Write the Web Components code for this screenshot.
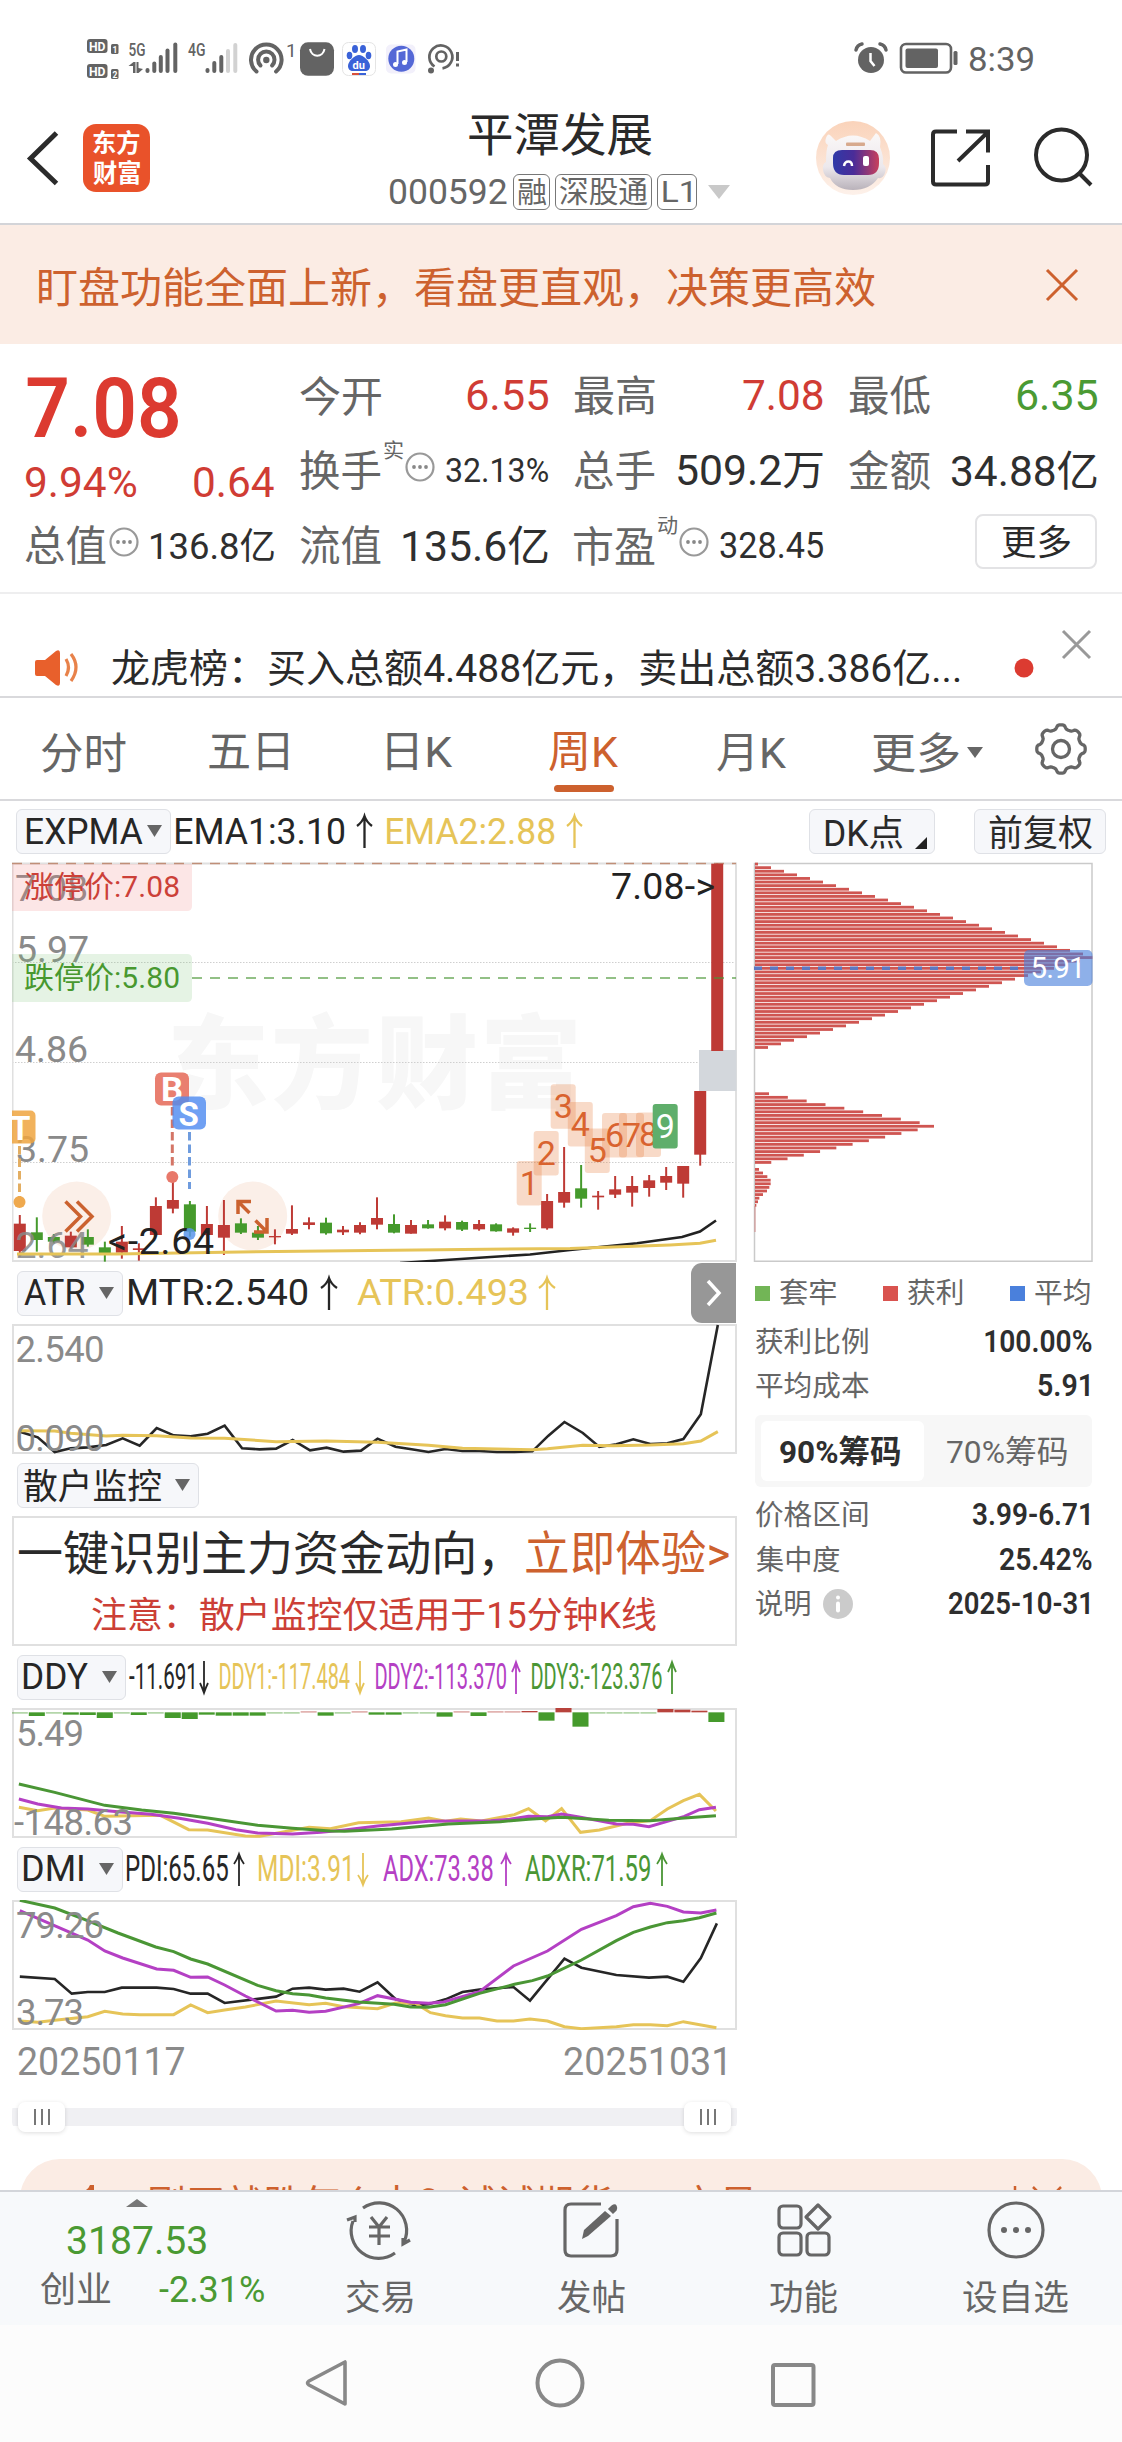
<!DOCTYPE html>
<html lang="zh-CN">
<head>
<meta charset="utf-8">
<title>平潭发展 000592</title>
<style>
html,body{margin:0;padding:0;background:#fff}
body{width:1122px;height:2442px;overflow:hidden;font-family:Roboto,"Noto Sans CJK SC",sans-serif;color:#2a2a2a;
--up:#d03c34;--down:#4a9a33;--brand:#cd612e;--gold:#e6c458;--violet:#b440c4;--mute:#666;--ink:#262626}
</style>
</head>
<body>
<stock-app></stock-app>
<script>
const FONT='Roboto,"Noto Sans CJK SC",sans-serif';
const ctx=document.createElement('canvas').getContext('2d');

/* Text whose box is trimmed to its ink: w = ink width, s = font size, b = weight, m = left margin, dy = vertical nudge */
customElements.define('fit-text',class extends HTMLElement{
  connectedCallback(){
    if(this.shadowRoot)return;
    const r=this.attachShadow({mode:'open'});
    const s=+this.getAttribute('s')||36,b=this.getAttribute('b')||400,w=+this.getAttribute('w');
    ctx.font=`${b} ${s}px ${FONT}`;
    const q=ctx.measureText(this.textContent.trim());
    const ink=q.actualBoundingBoxLeft+q.actualBoundingBoxRight;
    const k=w?w/ink:1,A=q.fontBoundingBoxAscent,D=q.fontBoundingBoxDescent;
    const base=(s-(A+D))/2+A,h=q.actualBoundingBoxAscent+q.actualBoundingBoxDescent;
    const m=+this.getAttribute('m')||0,dy=+this.getAttribute('dy')||0,mr=+this.getAttribute('mr')||0;
    r.innerHTML=`<style>:host{display:block;flex:none;width:${w||ink}px;height:${h}px;margin:0 ${mr}px 0 ${m}px}
    span{display:block;width:max-content;white-space:nowrap;font:${b} ${s}px/${s}px ${FONT};transform-origin:0 0;
    transform:translate(${q.actualBoundingBoxLeft*k}px,${q.actualBoundingBoxAscent-base+dy}px) scaleX(${k})}</style><span><slot></slot></span>`;
  }
});

const BASE='*{box-sizing:border-box}svg{display:block;flex:none;overflow:visible}.r{display:flex;align-items:center}';
function define(name,css,html){
  customElements.define(name,class extends HTMLElement{
    connectedCallback(){
      if(this.shadowRoot)return;
      this.attachShadow({mode:'open'}).innerHTML=`<style>:host{display:block}${BASE}${css}</style>`+(typeof html==='function'?html(this):html);
    }
  });
}

/* ---------- status bar ---------- */
define('status-bar',':host{height:96px;display:flex;justify-content:space-between;padding:30px 89px 0 80px;color:#636363}.t{height:60px;padding-top:0}',`
<svg width="400" height="60" viewBox="80 30 400 60" fill="#636363" font-family="Roboto" font-weight="700">
 <rect x="87" y="39" width="20.500" height="14" rx="3"/><text x="89" y="50.500" font-size="12.500" fill="#fff" textLength="16.500" lengthAdjust="spacingAndGlyphs">HD</text>
 <rect x="87" y="64" width="20.500" height="14" rx="3"/><text x="89" y="75.500" font-size="12.500" fill="#fff" textLength="16.500" lengthAdjust="spacingAndGlyphs">HD</text>
 <rect x="111" y="44" width="7.500" height="10" rx="1.500"/><text x="112.500" y="52.500" font-size="8.500" fill="#fff">1</text>
 <rect x="111" y="69" width="7.500" height="10" rx="1.500"/><text x="112.500" y="77.500" font-size="8.500" fill="#fff">2</text>
 <text x="128.500" y="56" font-size="17.500" font-weight="500" textLength="17" lengthAdjust="spacingAndGlyphs">5G</text>
 <text x="188" y="56" font-size="17.500" font-weight="500" textLength="17.500" lengthAdjust="spacingAndGlyphs">4G</text>
 <path d="M128.500 66l5-4h2v11h-2.500v-7zM143 69l-4.500 4h-2V62h2v6z"/>
 <rect x="145.500" y="68" width="4" height="5" rx="2"/><rect x="152.300" y="61.500" width="4" height="11.500" rx="2"/><rect x="158.800" y="55" width="4" height="18" rx="2"/><rect x="165.500" y="48.500" width="4" height="24.500" rx="2"/><rect x="173.300" y="42.500" width="4" height="30.500" rx="2"/>
 <rect x="205.500" y="68" width="4" height="5" rx="2"/><rect x="212.300" y="61" width="4" height="12" rx="2"/><rect x="219.300" y="55" width="4" height="18" rx="2"/><rect x="226" y="49" width="4" height="24" rx="2" fill="#d2d2d2"/><rect x="233.300" y="43" width="4" height="30" rx="2" fill="#d2d2d2"/>
 <g fill="none" stroke="#636363" stroke-width="4" stroke-linecap="round"><path d="M256.500 71.500a15.300 15.300 0 1 1 19.600 0"/><path d="M260.500 65.500a8.200 8.200 0 1 1 11.600 0"/></g><circle cx="266.300" cy="60" r="3.200"/>
 <text x="286" y="56.500" font-size="19" font-weight="400">1</text>
 <rect x="300" y="42.300" width="34" height="33.500" rx="8"/><path d="M310 49c1.500 9 13 9 14.500 0" fill="none" stroke="#fff" stroke-width="2"/>
 <rect x="342.500" y="42.500" width="33" height="33" rx="6" fill="#fff" stroke="#e4e4e4"/>
 <g fill="#3a62d8"><ellipse cx="355" cy="49" rx="3" ry="4"/><ellipse cx="363" cy="49" rx="3" ry="4"/><ellipse cx="349.500" cy="55.500" rx="2.800" ry="3.700"/><ellipse cx="368.500" cy="55.500" rx="2.800" ry="3.700"/><path d="M359 55c-4 0-11 6-11 11 0 3 2 5 5 5h12c3 0 5-2 5-5 0-5-7-11-11-11z"/></g>
 <text x="352.500" y="69" font-size="11" fill="#fff">du</text><path d="M352 74h7" stroke="#d8503c" stroke-width="2"/><path d="M359 74h7" stroke="#3a62d8" stroke-width="2"/>
 <rect x="386" y="44.500" width="29.500" height="29" rx="5" fill="#f2f0fb"/><circle cx="401.300" cy="58.700" r="13" fill="#5468d6"/><path d="M397.500 64v-12.500l9-2V62" fill="none" stroke="#fff" stroke-width="2"/><circle cx="395.500" cy="64.500" r="2.500" fill="#fff"/><circle cx="404.500" cy="62.500" r="2.500" fill="#fff"/>
 <g fill="none" stroke="#636363" stroke-width="2.700"><path d="M434.500 66.500a11.500 11.500 0 1 1 8 1.800"/><circle cx="441.300" cy="56.500" r="5"/></g><circle cx="431" cy="70.500" r="3"/><path d="M456 52h3v9h-3zM456 63.500h3v3h-3z"/>
</svg>
<div class="r t">
<svg width="104" height="60" viewBox="852 30 104 60" fill="#636363"><circle cx="871" cy="60" r="13"/><path d="M856 50q1-5 6-6M886 50q-1-5-6-6" fill="none" stroke="#636363" stroke-width="3.500" stroke-linecap="round"/><path d="M870.500 53v8l4 5" fill="none" stroke="#fff" stroke-width="2.500"/>
<rect x="901" y="44" width="50" height="28.500" rx="5" fill="none" stroke="#636363" stroke-width="2.600"/><rect x="905.500" y="48.500" width="32.500" height="19.500" rx="2"/><rect x="953.500" y="51" width="4" height="14" rx="1.500"/></svg>
<fit-text s="34" w="64" m="13" dy="-1">8:39</fit-text></div>`);

/* ---------- title bar ---------- */
define('title-bar',`:host{height:129px;border-bottom:2px solid #d3d4d8;display:flex;align-items:flex-start}
.logo{width:67px;height:68px;margin:28px 0 0 24px;border-radius:13px;background:#e9522a;color:#fff;display:flex;flex-direction:column;align-items:center;justify-content:center;gap:3px}
.mid{width:350px;margin:17px 0 0 236px;display:flex;flex-direction:column}
.name{height:42px;justify-content:center}.code{height:37px;margin-top:18px;color:#666}
.tag{height:36px;border:1.500px solid #777;border-radius:6px;display:flex;align-items:center;justify-content:center}`,`
<svg width="59" height="60" viewBox="0 128 59 60" style="margin-top:32px"><path d="M56.500 133L30.500 158.500l26 25" fill="none" stroke="#2b2b2b" stroke-width="5"/></svg>
<div class="logo"><fit-text s="24.500" b="700" w="47">东方</fit-text><fit-text s="24.500" b="700" w="47">财富</fit-text></div>
<div class="mid"><div class="r name"><fit-text s="46" w="183" mr="1">平潭发展</fit-text></div>
<div class="r code"><fit-text s="35" w="118" m="3">000592</fit-text><div class="tag" style="width:37px;margin-left:6px"><fit-text s="29" w="28">融</fit-text></div><div class="tag" style="width:97px;margin-left:5px"><fit-text s="30" w="88">深股通</fit-text></div><div class="tag" style="width:40px;margin-left:5px"><fit-text s="30" w="28">L1</fit-text></div>
<svg width="22" height="14" style="margin-left:11px"><path d="M0 0h22L11 14z" fill="#c9c9c9"/></svg></div></div>
<svg width="290" height="90" viewBox="810 114 290 90" style="margin:18px 0 0 74px">
<defs><linearGradient id="a" x2="0" y2="1"><stop stop-color="#fad3ba"/><stop offset="1" stop-color="#fdf1ea"/></linearGradient><linearGradient id="h" x2="0" y2="1"><stop stop-color="#fbf8f8"/><stop offset=".6" stop-color="#ece8ec"/><stop offset="1" stop-color="#b9b2ba"/></linearGradient><linearGradient id="v"><stop stop-color="#2f3aa8"/><stop offset=".45" stop-color="#4a2c98"/><stop offset="1" stop-color="#c8405c"/></linearGradient></defs>
<circle cx="853" cy="158" r="37" fill="url(#a)"/>
<path d="M826 138q2-6 5-2l5 5q17-11 34 0l6-8q6 3 4 14 4 10 3 17 4 3 2 9-2 6-7 5-8 12-25 12t-23-12q-6-1-7-8-1-6 3-8 0-12 2-17-4-2-2-7z" fill="url(#h)"/>
<path d="M833 158q0-8 9-8h28q9 0 9 9v4q0 12-11 12h-24q-11 0-11-12z" fill="url(#v)"/><path d="M844 166c1-6 8-6 8 0" fill="none" stroke="#fff" stroke-width="2.500"/><rect x="863" y="156" width="6" height="10" rx="2" fill="#fff"/><rect x="846" y="142.500" width="19" height="3.500" rx="1" fill="#d7a98d"/>
<g fill="none" stroke="#2b2b2b" stroke-width="4"><path d="M957 131.500h-21q-3 0-3 3v47q0 3 3 3h49q3 0 3-3V165"/><path d="M966 131.500h22v21M988 132l-30 29"/><circle cx="1061.500" cy="155" r="25.500"/><path d="M1079 173l12 12"/></g></svg>`);

define('promo-bar',':host{height:119px;background:#fbece4;color:var(--brand);display:flex;align-items:center;padding:4px 44px 0 39px;justify-content:space-between}',`
<fit-text s="42" w="836">盯盘功能全面上新，看盘更直观，决策更高效</fit-text>
<svg width="32" height="32" style="margin-top:-4px"><path d="M1 1l30 30M31 1L1 31" stroke="#cd612e" stroke-width="3"/></svg>`);

/* ---------- quote ---------- */
const DOTS='<svg width="30" height="30" viewBox="0 0 30 30" style="margin:-7px 0 0 VALpx"><circle cx="15" cy="15" r="13.500" fill="none" stroke="#999" stroke-width="2.200"/><circle cx="9" cy="15" r="1.900" fill="#888"/><circle cx="15" cy="15" r="1.900" fill="#888"/><circle cx="21" cy="15" r="1.900" fill="#888"/></svg>';
const dots=v=>DOTS.replace('VAL',v);
define('quote-cell',':host{display:flex;align-items:center;justify-content:space-between;height:40px;color:#2f2f2f}.l{color:#666}',e=>
`<div class="r l"><fit-text s="42" w="81">${e.getAttribute('k')}</fit-text><slot></slot></div><fit-text s="${e.getAttribute('s')||42}" w="${e.getAttribute('w')}" style="color:${e.getAttribute('c')||'inherit'}">${e.getAttribute('v')}</fit-text>`);
define('quote-panel',`:host{height:250px;border-bottom:2px solid #eeeeef;padding:0 25px 0 25px;display:grid;grid-template-columns:repeat(4,1fr);column-gap:26px;grid-template-rows:181px 69px}
.p{padding-top:33px;color:var(--up)}.c{padding-top:31px;display:flex;flex-direction:column;gap:35px}.b{padding-top:0}.btn{width:122px;height:55px;margin:-11px 0 0 auto;border:2px solid #e3e3e5;border-radius:8px;display:flex;align-items:center;justify-content:center}
.sup{align-self:flex-start;margin:-10px 0 0 3px}.pct{justify-content:space-between;margin-top:28px;height:32px}`,`
<div class="p"><fit-text s="84" b="600" w="151" m="2" style="color:#dc3a30">7.08</fit-text><div class="r pct"><fit-text s="42" w="110" m="1">9.94%</fit-text><fit-text s="42" w="80">0.64</fit-text></div></div>
<div class="c"><quote-cell k="今开" v="6.55" w="81" c="var(--up)"></quote-cell><quote-cell k="换手" v="32.13%" w="102" s="33"><fit-text class="sup" s="20" w="19" m="3">实</fit-text>${dots(2)}</quote-cell></div>
<div class="c"><quote-cell k="最高" v="7.08" w="80" c="var(--up)"></quote-cell><quote-cell k="总手" v="509.2万" w="145"></quote-cell></div>
<div class="c"><quote-cell k="最低" v="6.35" w="80" c="var(--down)"></quote-cell><quote-cell k="金额" v="34.88亿" w="146"></quote-cell></div>
<quote-cell class="b" k="总值" v="136.8亿" w="123" s="36">${dots(3)}</quote-cell>
<quote-cell k="流值" v="135.6亿" w="145"></quote-cell>
<quote-cell k="市盈" v="328.45" w="103" s="36"><fit-text class="sup" s="20" w="19" m="3">动</fit-text>${dots(2)}</quote-cell>
<div class="btn"><fit-text s="35" w="69">更多</fit-text></div>`);

define('news-bar',':host{height:104px;border-bottom:2px solid #d9d9dc;display:flex;padding-top:36px}.r{height:76px}',`
<div class="r"><svg width="46" height="38" viewBox="34 650 46 38" style="margin-left:34px"><path d="M37 661h8l11-9q4-2 4 2v30q0 4-4 2l-11-9h-8q-2 0-2-2v-12q0-2 2-2z" fill="#e8602c"/><path d="M66 660q5 8.500 0 17M71 655q10 13 0 27" fill="none" stroke="#e8824a" stroke-width="3.200"/></svg>
<fit-text s="38.500" w="848" m="32">龙虎榜：买入总额4.488亿元，卖出总额3.386亿...</fit-text>
<svg width="20" height="20" style="margin-left:54px"><circle cx="10" cy="10" r="9.500" fill="#dc3b31"/></svg></div>
<svg width="29" height="29" style="margin-left:28px"><path d="M1 1l27 27M28 1L1 28" stroke="#999" stroke-width="3"/></svg>`);

let gear='';
for(let a=0;a<=360;a+=3){const t=a*Math.PI/180,r=22.2+2.1*Math.tanh(2*Math.cos(8*t));gear+=(a?'L':'M')+(r*Math.sin(t)).toFixed(2)+' '+(-r*Math.cos(t)).toFixed(2)}
define('period-tabs',`:host{height:103px;border-bottom:2px solid #d9d9dc;display:flex;color:#666}
.t{width:167px;display:flex;flex-direction:column;align-items:center}.t .r{height:40px;margin-top:34px}.t i{width:60px;height:7px;border-radius:4px;background:var(--brand);margin:13px 2px 0 0}`,`
<div class="t"><div class="r"><fit-text s="43" w="85">分时</fit-text></div></div>
<div class="t"><div class="r"><fit-text s="43" w="79" mr="5">五日</fit-text></div></div>
<div class="t"><div class="r"><fit-text s="43" w="65" m="3">日K</fit-text></div></div>
<div class="t" style="color:var(--brand)"><div class="r"><fit-text s="43" w="69" mr="2">周K</fit-text></div><i></i></div>
<div class="t"><div class="r"><fit-text s="43" w="69" mr="1">月K</fit-text></div></div>
<div class="t" style="width:185px"><div class="r"><fit-text s="43" w="86" m="1">更多</fit-text><svg width="16" height="11" style="margin-left:8px"><path d="M0 0h16L8 11z" fill="#666"/></svg></div></div>
<svg width="56" height="56" viewBox="-28 -28 56 56" style="margin:23px 0 0 13px"><g fill="none" stroke="#666" stroke-width="3.300" stroke-linejoin="round"><path d="${gear}z"/><circle r="8.500"/></g></svg>`);

/* ---------- chips and indicator headers ---------- */
define('drop-chip',`:host{display:flex;align-items:center;flex:none;height:45px;background:#f6f7fa;border:1.500px solid #dfe1e6;border-radius:6px;color:var(--ink)}svg{margin:-1px 8px 0 auto}`,e=>
`<fit-text s="${e.getAttribute('s')||36.5}" w="${e.getAttribute('w')}" m="${e.getAttribute('m')||6}">${e.getAttribute('k')}</fit-text><svg width="15" height="12"><path d="M0 0h15L7.500 12z" fill="#666"/></svg>`);
const V=(t,w,m,c,s=37.5)=>`<fit-text s="${s}" w="${w}" m="${m}" style="color:${c}">${t}</fit-text>`;
const A=(t,w,m,c)=>`<svg width="${w}" height="33" viewBox="0 0 ${w} 33" style="margin-left:${m}px;color:${c}"><path d="${t==='↑'?`M${w/2} 33V2M1 11Q${w/2-2} 7 ${w/2} 1Q${w/2+2} 7 ${w-1} 11`:`M${w/2} 0V31M1 22Q${w/2-2} 26 ${w/2} 32Q${w/2+2} 26 ${w-1} 22`}" fill="none" stroke="currentColor" stroke-width="${w<14?1.8:2.3}"/></svg>`;
const K='#262626',G='#e6c458',P='#b440c4',N='#4a9635';

define('expma-head',':host{display:flex;height:61px;align-items:center;padding-left:16px}.chip{height:45px;background:#f6f7fa;border:1.500px solid #dfe1e6;border-radius:6px;display:flex;align-items:center}',`
<drop-chip k="EXPMA" w="116" m="10" style="width:155px"></drop-chip>${V('EMA1:3.10',168,5,K)}${A('↑',17,12,K)}${V('EMA2:2.88',168,14,G)}${A('↑',17,11,G)}
<div class="chip" style="width:126px;margin-left:226px"><fit-text s="36" w="78" m="15">DK点</fit-text><svg width="12" height="12" style="margin:22px 0 0 12px"><path d="M12 0v12H0z" fill="#222"/></svg></div>
<div class="chip" style="width:132px;margin-left:39px;justify-content:center"><fit-text s="36" w="103">前复权</fit-text></div>`);

/* ---------- main K-line chart: high, body top, body bottom, low, rising ---------- */
const C=[[1065,1091,1173,1190,1],[1072,1117,1140,1175,0],[1122,1131,1145,1150,0],[1115,1127,1162,1165,1],[1108,1131,1154,1160,0],[1145,1162,1180,1205,0],[1098,1145,1178,1196,1],[1150,1165,1170,1202,1],[1012,1038,1125,1125,1],[950,1020,1046,1060,1],[1023,1033,1115,1130,0],[1038,1092,1125,1127,1],[1020,1095,1133,1185,1],[1075,1090,1118,1122,0],[1098,1118,1133,1140,0],[1108,1128,1132,1153,1],[1036,1107,1121,1125,1],[1072,1087,1095,1108,1],[1073,1088,1120,1124,0],[1098,1109,1117,1125,1],[1087,1095,1118,1123,1],[1012,1074,1094,1108,1],[1063,1092,1118,1120,0],[1080,1095,1121,1121,1],[1080,1093,1105,1106,0],[1066,1085,1105,1111,1],[1082,1086,1109,1113,0],[1080,1092,1108,1112,1],[1090,1093,1114,1115,0],[1102,1105,1118,1127,1],[1090,1103,1107,1116,0],[1002,1023,1105,1109,1],[861,996,1028,1043,1],[915,985,1016,1043,0],[993,1007,1012,1049,1],[948,988,1004,1014,1],[948,978,998,1040,1],[945,961,984,1010,1],[921,948,968,990,1],[918,918,971,1013,1],[693,693,884,917,1],[11,11,573,573,1]];
const yy=v=>860+v/3;
const candles=C.map((c,i)=>{const x=19.8+17.01*i,f=c[4]?'#be3a35':'#459a2c';return `<path d="M${x} ${yy(c[0])}V${yy(c[3])}" stroke="${f}" stroke-width="2"/><rect x="${x-6}" y="${yy(c[1])}" width="12" height="${(c[2]-c[1])/3}" fill="${f}"/>`}).join('');
const nine=[[516.7,1161],[533.7,1131],[550.7,1084.3],[567.8,1102],[584.8,1128.5],[602,1113],[619,1113],[636,1112.5],[652.7,1104]].map(([x,y],i)=>`<rect x="${x}" y="${y}" width="25" height="44.500" rx="3" fill="${i===8?'#5fae6b':'rgba(228,118,52,.27)'}"/>`+`<text x="${x+12.5}" y="${y+33.5}" text-anchor="middle" font-size="34" fill="${i===8?'#fff':'#d9632f'}">${i+1}</text>`).join('');
define('k-chart','svg text{font-family:Roboto,"Noto Sans CJK SC",sans-serif}:host{height:400px;margin-left:12px}',`
<svg width="725" height="400" viewBox="12 862 725 400" style="overflow:hidden">
<g font-size="102" font-weight="900" fill="#f7f7f7"><text x="167 271 376 480" y="1101">东方财富</text></g>
<g stroke="#cfcfcf" stroke-width="1" stroke-dasharray="1.500 1.500"><path d="M12 962.500H736M12 1062.500H736M12 1162.500H736"/></g>
<g fill="#8a8a8a" font-size="37.500"><text x="15" y="901">7.08</text><text x="16" y="962">5.97</text><text x="15" y="1062">4.86</text><text x="16" y="1162">3.75</text></g>
<path d="M12 863.500H736V1261H12.500V863" fill="none" stroke="#e0e0e0" stroke-width="2"/>
<path d="M12 863.500H736" stroke="#c08f78" stroke-width="1.500" stroke-dasharray="10 8"/>
<path d="M12 864h180v42q0 5-5 5H12z" fill="#f08080" fill-opacity=".2"/><path d="M12 954h175q5 0 5 5v38q0 5-5 5H12z" fill="#7fc47a" fill-opacity=".2"/>
<text x="24" y="897" font-size="30" textLength="156" fill="#cc4038">涨停价:7.08</text><text x="24" y="988" font-size="30" textLength="156" fill="#48982f">跌停价:5.80</text>
<circle cx="76.700" cy="1216" r="34.500" fill="#fbefe8"/><circle cx="252.700" cy="1216" r="34.500" fill="#fbefe8"/>
<rect x="699" y="1050" width="37.500" height="41" fill="#d3d7dc"/>
${candles}
<path d="M192 978H736" stroke="#4a9635" stroke-opacity=".6" stroke-width="2" stroke-dasharray="10 8"/>
<text x="15.500" y="1258" font-size="37.500" fill="#888" opacity=".85">2.64</text>
<path d="M400 1263L483 1257.500 530 1254.500 570 1250 637 1243.300 682 1237 700 1231.500 716 1220.500" fill="none" stroke="#222" stroke-width="2.600"/>
<path d="M17 1254H117L240 1252 370 1250.500 570 1248.500 670 1245 700 1243.300 716 1240.300" fill="none" stroke="#e6c458" stroke-width="3"/>
<g fill="none" stroke-width="3" stroke-dasharray="8.500 4"><path d="M19.500 1146V1200" stroke="#e3ae62"/><path d="M172.300 1107V1166" stroke="#d47566"/><path d="M189.500 1132V1189" stroke="#6f9cde"/></g>
<circle cx="19.500" cy="1202" r="6" fill="#efa94e"/><circle cx="172.300" cy="1177" r="6" fill="#e8786a"/><circle cx="189.500" cy="1234" r="6" fill="#5b95ea" fill-opacity=".85"/>
<rect x="2" y="1110.500" width="33.500" height="33" rx="5" fill="#efa540" fill-opacity=".85"/><rect x="155" y="1072.500" width="34" height="33" rx="6" fill="#e87868" fill-opacity=".95"/><text x="161" y="1101" font-size="34" font-family="Liberation Sans" font-weight="700" fill="#fff" textLength="22" lengthAdjust="spacingAndGlyphs">B</text><rect x="172.500" y="1096.500" width="33.500" height="33" rx="6" fill="#4f8bf0" fill-opacity=".82"/>
<g font-size="33" fill="#fff" font-weight="700"><text x="178.500" y="1125.500">S</text><text x="10" y="1139.500">T</text></g>
${nine}
<text x="611" y="899" font-size="37.500" fill="#222" textLength="104">7.08-&gt;</text><text x="108" y="1254" font-size="37.500" fill="#222" textLength="106">&lt;-2.64</text>
<g fill="none" stroke="#cb622f" stroke-width="3.500"><path d="M65.500 1201.500l15 15-15 15M77 1201.500l15 15-15 15M249.500 1213l-11-11M238 1214v-12.500h13M255.500 1220.500l11 11M267 1218v14h-13"/></g>
</svg>`);

/* ---------- sub charts ---------- */
const pl=(p,c,w=3)=>`<polyline points="${p}" fill="none" stroke="${c}" stroke-width="${w}" vector-effect="non-scaling-stroke"/>`;
define('sub-chart',':host{display:block;height:130px;margin-left:12px;width:725px}svg text{font-family:Roboto,sans-serif;fill:#8a8a8a;font-size:36.500px}',e=>{
 const y=+e.getAttribute('y'),o=+e.getAttribute('o'),d=DATA[e.getAttribute('k')];
 return `<svg width="725" height="130" viewBox="12 ${y} 725 130" style="overflow:hidden"><path d="M13 ${y+1}H736V${y+129}H13z" fill="none" stroke="#e0e0e0" stroke-width="2"/>${d.f?'':d.t}<g transform="translate(0 ${o}) scale(.47194 .33333)">${d.g}</g>${d.f?d.t:''}</svg>`});
/* bar heights; negative values rise above the zero line */
const bars=[2,11,2,7,8,17,2,8,2,17,20,7,10,10,10,2,2,-3,10,2,-3,7,7,2,2,13,-3,11,-3,-3,-4,25,-13,43,2,2,2,2,-10,-8,-5,29];
const DATA={
atr:{f:1,t:'<text x="15.500" y="1362" textLength="89">2.540</text><text x="15.500" y="1451" textLength="89">0.090</text>',
g:pl('42,515 80,532 116,576 150,565 186,562 225,555 260,535 296,557 332,504 368,526 404,529 440,521 476,497 513,565 550,568 585,566 620,540 657,571 692,563 728,575 765,572 800,536 838,560 872,568 908,576 944,567 980,573 1016,573 1053,576 1090,576 1128,574 1162,527 1196,486 1235,519 1270,561 1306,553 1342,538 1378,552 1414,550 1448,537 1485,463 1521,195',K,2.6)+pl('42,512 116,513 150,520 225,528 260,526 332,527 404,534 476,535 585,545 692,543 800,547 908,556 980,565 1128,569 1160,566 1235,556 1300,557 1378,555 1448,551 1485,543 1521,515',G)},
ddy:{f:1,t:'<text x="16" y="1746" textLength="68">5.49</text><text x="14" y="1834.500" textLength="119">-148.63</text>',
g:bars.map((h,i)=>`<rect x="${25+36*i}" y="${h<0?217+h:217}" width="34" height="${Math.abs(h)<4?3.5:Math.abs(h)}" fill="${h<0?'#b8433c':'#459a2c'}" opacity="${Math.abs(h)<4?.6:1}"/>`).join('')+pl('40,502 80,512 116,504 186,510 222,529 340,526 400,569 440,570 520,588 550,589 600,576 655,562 700,566 760,548 850,545 908,534 944,544 976,537 1020,543 1090,524 1120,506 1156,543 1190,506 1230,577 1270,570 1330,550 1378,542 1414,507 1448,482 1482,463 1517,513',G)+pl('40,477 80,492 130,504 186,507 250,515 320,523 380,535 440,550 500,569 546,579 620,582 680,577 730,570 800,558 908,544 1040,542 1080,538 1120,529 1160,530 1190,522 1230,532 1306,552 1342,553 1375,560 1414,544 1450,529 1482,509 1517,502',P)+pl('40,432 116,457 222,496 300,510 368,520 440,534 546,556 620,565 700,573 730,574 830,567 950,552 1060,545 1120,538 1190,532 1240,536 1290,541 1378,542 1450,534 1517,527',N)},
dmi:{f:1,t:'<text x="16" y="1938" textLength="88">79.26</text><text x="16" y="2025" textLength="68">3.73</text>',
g:pl('42,380 116,387 152,431 186,426 222,426 258,413 332,413 368,417 404,431 440,431 476,459 585,440 620,416 655,413 690,419 728,416 762,425 800,397 838,447 880,466 908,463 944,448 980,426 1016,419 1088,411 1123,452 1196,326 1232,353 1306,375 1375,383 1414,380 1448,395 1485,324 1519,220',K,2.6)+pl('42,513 80,517 116,511 186,500 222,484 260,492 296,494 368,494 404,465 440,488 476,480 520,471 585,453 655,464 690,460 728,470 800,476 838,459 880,460 912,488 944,497 980,504 1016,504 1053,513 1088,513 1123,507 1160,513 1196,530 1232,536 1306,530 1342,524 1378,524 1414,527 1448,515 1518,533',G)+pl('42,182 80,205 186,270 222,303 260,324 332,357 368,361 404,382 440,381 476,405 520,438 585,483 620,481 655,487 690,484 760,461 800,437 870,457 908,460 940,456 1016,425 1088,348 1160,303 1232,238 1306,197 1342,170 1378,160 1414,169 1448,186 1485,189 1518,180',P)+pl('42,151 116,174 180,209 250,249 330,291 368,305 404,327 440,342 546,406 585,422 620,431 655,435 690,444 760,456 835,463 870,471 908,472 944,464 1016,430 1090,403 1128,392 1160,378 1232,330 1306,272 1342,247 1378,231 1414,218 1448,212 1482,203 1518,189',N)}};

define('indicator-column',`:host{width:740px;flex:none}.h{height:62px;padding-left:17px}
.fold{width:45px;height:60px;margin-left:135px;border-radius:11px 0 0 11px;background:#979797;display:flex;align-items:center;justify-content:center}
.ad{width:725px;height:130px;margin-left:12px;border:2px solid #e0e0e0;padding:15px 0 0 5px}.ad .r{height:38px}.ad .n{height:36px;margin-top:25px;color:#cc3f36;padding-left:73px}
.d{height:64px;color:#8a8a8a;padding:0 10px 0 18px;justify-content:space-between}
.s{height:29px;margin:8px 3px 0 12px;padding:0 6px;width:725px;justify-content:space-between;background:linear-gradient(#f0f0f3,#f0f0f3) center/100% 18px no-repeat;border-radius:9px}
.s b{width:47px;height:30px;border-radius:7px;background:#fff;box-shadow:0 1px 4px #0002;display:flex;align-items:center;justify-content:center;gap:5px}.s i{width:2px;height:16px;background:#777}`,`
<k-chart></k-chart>
<div class="r h"><drop-chip k="ATR" w="61" style="width:106px"></drop-chip>${V('MTR:2.540',178,6,K)}${A('↑',18,13,K)}${V('ATR:0.493',170,19,G)}${A('↑',18,11,G)}<div class="fold"><svg width="14" height="26"><path d="M1 1l11 12L1 25" fill="none" stroke="#fff" stroke-width="3.500"/></svg></div></div>
<sub-chart k="atr" y="1324" o="1260"></sub-chart>
<div class="r h"><drop-chip k="散户监控" s="35" w="137" style="width:182px"></drop-chip></div>
<div class="ad"><div class="r"><fit-text s="46.500" w="474">一键识别主力资金动向，</fit-text><fit-text s="46.500" w="203" m="33" style="color:var(--brand)">立即体验&gt;</fit-text></div><div class="r n"><fit-text s="36" w="564">注意：散户监控仅适用于15分钟K线</fit-text></div></div>
<div class="r h"><drop-chip k="DDY" w="64" style="width:109px"></drop-chip>${V('-11.691',65,3,K)}${A('↓',10,5,K)}${V('DDY1:-117.484',130,11,G)}${A('↓',10,5,G)}${V('DDY2:-113.370',130,11,P)}${A('↑',10,5,P)}${V('DDY3:-123.376',130,11,N)}${A('↑',10,5,N)}</div>
<sub-chart k="ddy" y="1708" o="1640"></sub-chart>
<div class="r h"><drop-chip k="DMI" w="59" style="width:106px"></drop-chip>${V('PDI:65.65',101,4,K)}${A('↑',12,5,K)}${V('MDI:3.91',91,14,G)}${A('↓',12,7,G)}${V('ADX:73.38',110,14,P)}${A('↑',12,7,P)}${V('ADXR:71.59',125,13,N)}${A('↑',12,6,N)}</div>
<sub-chart k="dmi" y="1900" o="1850"></sub-chart>
<div class="r d"><fit-text s="38.500" w="166">20250117</fit-text><fit-text s="38.500" w="161" mr="5">20251031</fit-text></div>
<div class="r s"><b><i></i><i></i><i></i></b><b><i></i><i></i><i></i></b></div>`);

/* ---------- cost distribution ---------- */
const row=(y,e)=>`<rect x="755" y="${790+y/3-1.35}" width="${(e-45)/3}" height="2.800" fill="#cf5551"/>`;
let cost='';
for(let k=0;k<52;k++)cost+=row(222+10.79*k,k<26?54+39*k:k===26?1057:84+39*(51-k));
for(let k=0;k<20;k++)cost+=row(911+10.85*k,k<9?87+56.5*k:k===9?582:533-48.8*(k-10));
[57,69,82,92,92,88,81,69,58,54,49].forEach((e,k)=>cost+=row(1138+10.8*k,e));
const L=(c,t,w)=>`<div class="r"><i style="background:${c}"></i><fit-text s="28.500" w="${w}" m="10">${t}</fit-text></div>`;
const I=(k,w,v,x,h,mr=3,extra='')=>`<div class="r v" style="height:${h}px"><div class="r"><fit-text s="28.500" w="${w}" m="2">${k}</fit-text>${extra}</div><fit-text s="30.500" b="600" w="${x}" mr="${mr}" style="color:#2e2e2e">${v}</fit-text></div>`;
define('cost-panel',`:host{width:338px;margin-left:14px;color:#666}.g{height:32px;margin-top:15px;justify-content:space-between;padding:0 2px 0 1px}.g i{width:15px;height:15px}
.v{justify-content:space-between}.w1{margin-top:11px}.seg{display:flex;height:72px;margin:7px 0 6px 1px;width:337px;padding:6px;background:#f7f7f7;border-radius:6px}.seg div{flex:1;display:flex;align-items:center;justify-content:center;border-radius:6px}.seg .on{background:#fff;color:#2e2e2e}`,`
<svg width="339" height="400" viewBox="754 862 339 400"><path d="M754.500 863.500H1092V1261.300H754.500z" fill="none" stroke="#cacaca" stroke-width="1.500"/>${cost}
<path d="M755 1206v26" stroke="#d08a88" stroke-width="1"/><path d="M754 968.300H1024" stroke="#5c78c2" stroke-width="3.500" stroke-dasharray="8 8"/>
<rect x="1024" y="950" width="68.500" height="36" rx="5" fill="#4880dc" fill-opacity=".62"/><text x="1030.500" y="977.700" font-size="29.500" font-family="Roboto" fill="#fff" textLength="55">5.91</text></svg>
<div class="r g">${L('#72b556','套牢',56)}${L('#d9534f','获利',55)}${L('#4a80dc','平均',55)}</div>
<div class="w1">${I('获利比例',112,'100.00%',107,44,0)}${I('平均成本',113,'5.91',51,44)}</div>
<div class="seg"><div class="on"><fit-text s="31.500" b="700" w="120" mr="5">90%筹码</fit-text></div><div><fit-text s="31.500" w="120" m="4">70%筹码</fit-text></div></div>
${I('价格区间',112,'3.99-6.71',116,44)}${I('集中度',84,'25.42%',92,45,0)}${I('说明',54,'2025-10-31',140,44,3,'<svg width="30" height="30" style="margin-left:13px"><circle cx="15" cy="15" r="15" fill="#cbcbcb"/><circle cx="15" cy="8.500" r="2" fill="#fff"/><rect x="13" y="12.500" width="4" height="11" rx="2" fill="#fff"/></svg>')}`);

define('teaser-bar',':host{height:31px;overflow:hidden;padding:0 20px;margin-top:0;color:var(--brand)}.b{height:90px;background:#fbece4;border-radius:40px 40px 0 0;display:flex;align-items:flex-start;padding:26px 35px 0 58px}',`
<div class="b"><svg width="18" height="20"><path d="M16 0v20H6V8H0q10-2 12-8z" fill="#cd612e"/></svg><fit-text s="38.500" w="604" m="54">刚买就跌怎么办？试试期货T+0交易</fit-text><svg width="60" height="30" style="margin-left:auto"><path d="M8 1v30M26 2l28 28M54 2L26 30" stroke="#cd612e" stroke-width="2.500" fill="none"/></svg></div>`);

/* ---------- bottom bars ---------- */
const ICONS={
trade:'<path d="M-16-22A27.500 27.500 0 0 1 25 12M16 23A27.500 27.500 0 0 1-26-9M-32-10l8-3V-8M31 10l-7 4V8M-8-13L0-3 8-13M0-3V15M-10-3H11M-10 6H11"/>',
post:'<path d="M10-26H-20q-6 0-6 6V20q0 6 6 6H20q6 0 6-6V-11"/><path d="M-9 9l2-9L14-19l6 5L-3 6z" fill="#666" stroke="none"/><path d="M18-21l3-3q3-2 4 0t0 4l-3 3z" fill="#666" stroke="#666" stroke-width="1.500"/>',
tools:'<rect x="-25" y="-24" width="22" height="22" rx="4"/><rect x="-25" y="3" width="22" height="22" rx="4"/><rect x="3" y="3" width="22" height="22" rx="4"/><path d="M14-25L26-13 14-1 2-13z" stroke-linejoin="round"/>',
more:'<circle r="27"/><g fill="#666" stroke="none"><circle cx="-12" r="3"/><circle r="3"/><circle cx="12" r="3"/></g>'};
define('action-item',':host{display:flex;flex-direction:column;align-items:center;flex:1}.r{height:34px;margin-top:19px}',e=>
`<svg width="70" height="60" viewBox="-35 -30 70 60" style="margin-top:8px" fill="none" stroke="#666" stroke-width="3.200">${ICONS[e.getAttribute('i')]}</svg><div class="r"><fit-text s="35" w="${e.getAttribute('w')}">${e.getAttribute('k')}</fit-text></div>`);
define('action-bar',`:host{height:135px;background:#f7f9fb;border-top:2px solid #d3d5da;display:flex;color:#666}
.ix{width:273px;flex:none;display:flex;flex-direction:column}.ix svg{margin:7px 0 0 126px}.a{height:30px;margin-top:18px;padding-left:67px}.b{height:34px;margin-top:17px;padding-left:40px}.items{display:flex;width:849px}`,`
<div class="ix"><svg width="22" height="8"><path d="M0 8h22L11 0z" fill="#777"/></svg><div class="r a" style="color:#4a9a33"><fit-text s="39.500" w="139">3187.53</fit-text></div><div class="r b"><fit-text s="35" w="70">创业</fit-text><fit-text s="36" w="105" m="49" style="color:#4a9a33">-2.31%</fit-text></div></div>
<div class="items">
<action-item i="trade" k="交易" w="67"></action-item>
<action-item i="post" k="发帖" w="67"></action-item>
<action-item i="tools" k="功能" w="67"></action-item>
<action-item i="more" k="设自选" w="105"></action-item>
</div>`);
define('system-nav',':host{height:117px;background:#fcfcfc;display:flex;align-items:flex-start;padding:33px 0 0 304px}',`
<svg width="46" height="50" fill="none" stroke="#888" stroke-width="3.600"><path d="M41 4V46L5 27q-3-2 0-4z" stroke-linejoin="round"/></svg>
<svg width="50" height="50" style="margin-left:185px"><circle cx="25" cy="25" r="22.500" fill="none" stroke="#888" stroke-width="4"/></svg>
<svg width="50" height="50" style="margin-left:183px"><rect x="5" y="7" width="40.500" height="40" rx="2" fill="none" stroke="#888" stroke-width="4"/></svg>`);

define('stock-app',':host{width:1122px;height:2442px;display:flex;flex-direction:column;background:#fff}:host>*{flex:none}.body{display:flex;height:1297px}',`
<status-bar></status-bar><title-bar></title-bar><promo-bar></promo-bar><quote-panel></quote-panel><news-bar></news-bar><period-tabs></period-tabs><expma-head></expma-head>
<div class="body"><indicator-column></indicator-column><cost-panel></cost-panel></div>
<teaser-bar></teaser-bar><action-bar></action-bar><system-nav></system-nav>`);
</script>
</body>
</html>
